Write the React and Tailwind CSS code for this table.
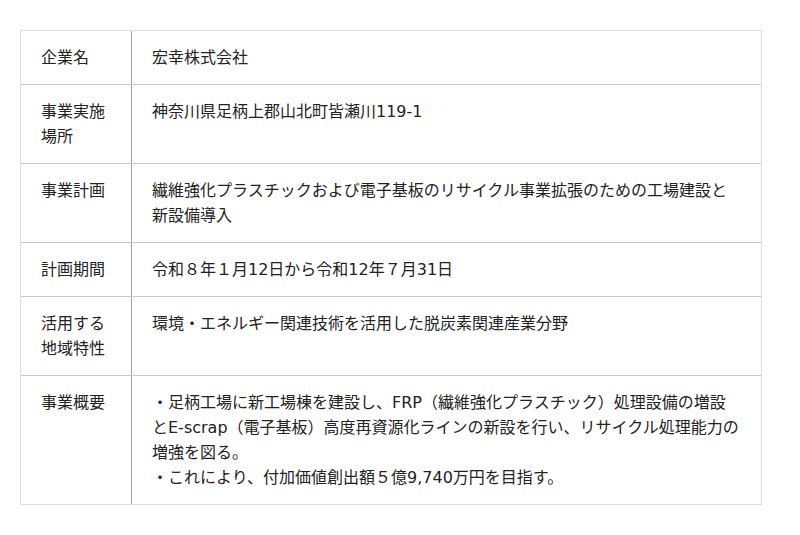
import React from "react";

const rows = [
  { h: "企業名", b: "宏幸株式会社" },
  { h: "事業実施場所", b: "神奈川県足柄上郡山北町皆瀬川119-1" },
  { h: "事業計画", b: "繊維強化プラスチックおよび電子基板のリサイクル事業拡張のための工場建設と新設備導入" },
  { h: "計画期間", b: "令和８年１月12日から令和12年７月31日" },
  { h: "活用する地域特性", b: "環境・エネルギー関連技術を活用した脱炭素関連産業分野" },
  {
    h: "事業概要",
    b: (
      <>
        ・足柄工場に新工場棟を建設し、FRP（繊維強化プラスチック）処理設備の増設とE-scrap（電子基板）高度再資源化ラインの新設を行い、リサイクル処理能力の増強を図る。
        <br />
        ・これにより、付加価値創出額５億9,740万円を目指す。
      </>
    ),
  },
];

export default function App() {
  return (
    <div
      className="w-[800px] h-[535px] bg-white pt-[30px] pl-[20px] text-[16px] leading-[25px] text-[#222]"
      style={{ fontFamily: '"DejaVu Sans", "Noto Sans CJK JP", sans-serif' }}
    >
      <div className="w-[742px] border border-[#dddddd]">
        {rows.map((r, i) => (
          <div key={i} className={"flex " + (i > 0 ? "border-t border-[#c8c8c8]" : "")}>
            <div className="w-[111px] shrink-0 border-r border-[#a0a0a0] px-5 py-[14px]">{r.h}</div>
            <div className="flex-1 px-5 py-[14px]">{r.b}</div>
          </div>
        ))}
      </div>
    </div>
  );
}
